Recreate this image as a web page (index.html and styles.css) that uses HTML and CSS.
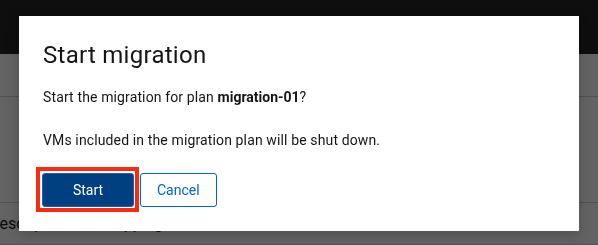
FILE: index.html
```html
<!DOCTYPE html>
<html lang="en">
  <head>
    <meta charset="UTF-8" />
    <meta name="viewport" content="width=device-width,initial-scale=1.0" />
    <title>Start migration</title>
    <link rel="stylesheet" href="styles.css">
  </head>
  <body>
    <div class="page">
      <header class="masthead"></header>
      <main class="content">
        <div class="row row-head"></div>
        <div class="row row-body"></div>
        <div class="row row-text">
          <span class="cell cell-desc">Description</span>
          <span class="cell cell-map">Mapping</span>
        </div>
      </main>
    </div>
    <div class="backdrop">
      <div class="modal" role="dialog">
        <h1 class="modal-title">Start migration</h1>
        <div class="modal-body">
          <p>Start the migration for plan <strong>migration-01</strong>?</p>
          <p>VMs included in the migration plan will be shut down.</p>
        </div>
        <div class="modal-footer">
          <span class="highlight"><button class="btn btn-primary">Start</button></span
          ><button class="btn btn-secondary">Cancel</button>
        </div>
      </div>
    </div>
  </body>
</html>
```

FILE: styles.css
```css
body {
  margin: 0;
  font-family: Roboto, "Liberation Sans", sans-serif;
  color: #151515;
  background-color: #fff;
  overflow: hidden;
}
.page {
  height: 100vh;
  display: flex;
  flex-direction: column;
}
.masthead {
  height: 54px;
  background-color: #212121;
}
.content {
  flex: 1;
}
.row {
  border-bottom: 1px solid #cfcfcf;
}
.row-head {
  height: 42px;
}
.row-body {
  height: 105px;
}
.row-text {
  display: flex;
  height: 41px;
  align-items: center;
  font-size: 16px;
}
.cell-desc {
  margin-left: -11px;
}
.cell-map {
  margin-left: 31px;
}
.backdrop {
  position: fixed;
  top: 0;
  left: 0;
  right: 0;
  bottom: 0;
  background-color: rgba(3, 3, 3, 0.62);
  padding: 16px 0 0 19px;
}
.modal {
  width: 560px;
  box-sizing: border-box;
  padding: 24px;
  background-color: #fff;
  box-shadow: 0 4px 12px rgba(0, 0, 0, 0.2);
}
.modal-title {
  margin: 0 0 16px;
  font-size: 24px;
  font-weight: 400;
  line-height: 31px;
  letter-spacing: 0.27px;
}
.modal-body {
  font-size: 14px;
  line-height: 21px;
  letter-spacing: 0.13px;
}
.modal-body p {
  margin: 0 0 22px;
}
.modal-body strong {
  font-weight: 700;
  letter-spacing: 0;
}
.modal-footer {
  display: flex;
  gap: 6px;
}
.highlight {
  display: flex;
  margin: -6px -5px -5px -7px;
  padding: 2px 1px 1px 2px;
  border: 4px solid #ff2a0d;
  background-color: #fff;
}
.btn {
  height: 34px;
  padding: 0 16px;
  border-radius: 3px;
  font-family: inherit;
  font-size: 14px;
  cursor: pointer;
}
.btn-primary {
  width: 92px;
  border: 1px solid #0066cc;
  background-color: #004080;
  color: #fff;
}
.btn-secondary {
  border: 1px solid #0066cc;
  background-color: #fff;
  color: #0066cc;
}
```
